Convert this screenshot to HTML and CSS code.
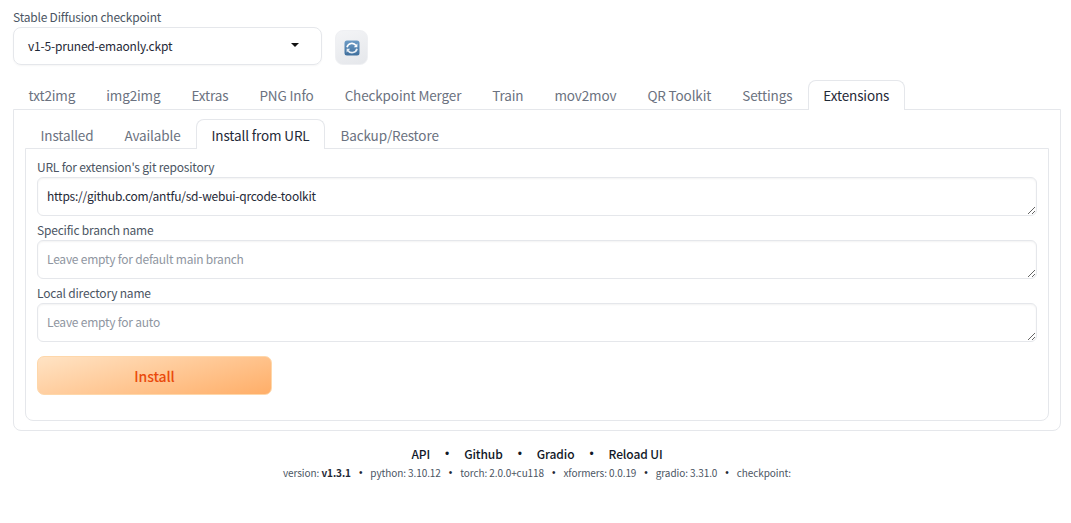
FILE: index.html
```html
<!DOCTYPE html>
<html lang="en">
<head>
<meta charset="utf-8">
<title>Extensions</title>
<link rel="stylesheet" href="styles.css">
</head>
<body>
<div class="app">
  <div class="top">
    <div class="ckpt">
      <div class="label ckpt-label">Stable Diffusion checkpoint</div>
      <div class="select"><span>v1-5-pruned-emaonly.ckpt</span><i class="caret"></i></div>
    </div>
    <button class="refresh" aria-label="Refresh">
      <svg width="16" height="16" viewBox="0 0 16 16">
        <defs><linearGradient id="ic" x1="0" y1="0" x2="0" y2="1"><stop offset="0" stop-color="#6d9cc6"/><stop offset="1" stop-color="#3f6f9d"/></linearGradient></defs>
        <rect x="0.5" y="0.5" width="15" height="15" rx="2.5" fill="url(#ic)"/>
        <path d="M3 7.2A5 5 0 0 1 12 5.6" fill="none" stroke="#fff" stroke-width="1.7"/>
        <path d="M13.4 3.6v3.6H9.8z" fill="#fff"/>
        <path d="M13 8.8A5 5 0 0 1 4 10.4" fill="none" stroke="#e8eef4" stroke-width="1.7"/>
        <path d="M2.6 12.4V8.8h3.6z" fill="#e8eef4"/>
      </svg>
    </button>
  </div>
  <nav class="tabs main-tabs">
    <a class="tab">txt2img</a><a class="tab">img2img</a><a class="tab">Extras</a><a class="tab">PNG Info</a><a class="tab">Checkpoint Merger</a><a class="tab">Train</a><a class="tab">mov2mov</a><a class="tab">QR Toolkit</a><a class="tab">Settings</a><a class="tab active">Extensions</a>
  </nav>
  <section class="panel outer">
    <nav class="tabs sub-tabs">
      <a class="tab">Installed</a><a class="tab">Available</a><a class="tab active">Install from URL</a><a class="tab">Backup/Restore</a>
    </nav>
    <div class="panel inner">
      <label class="field">
        <span class="label">URL for extension's git repository</span>
        <textarea class="input" rows="1">https://github.com/antfu/sd-webui-qrcode-toolkit</textarea>
      </label>
      <label class="field">
        <span class="label">Specific branch name</span>
        <textarea class="input" rows="1" placeholder="Leave empty for default main branch"></textarea>
      </label>
      <label class="field">
        <span class="label">Local directory name</span>
        <textarea class="input" rows="1" placeholder="Leave empty for auto"></textarea>
      </label>
      <button class="install">Install</button>
    </div>
  </section>
  <footer class="footer">
    <div class="links"><a>API</a><b>•</b><a>Github</a><b>•</b><a>Gradio</a><b>•</b><a>Reload UI</a></div>
    <div class="versions">
      <span>version: <strong>v1.3.1</strong></span><b>•</b><span>python: 3.10.12</span><b>•</b><span>torch: 2.0.0+cu118</span><b>•</b><span>xformers: 0.0.19</span><b>•</b><span>gradio: 3.31.0</span><b>•</b><span>checkpoint:</span>
    </div>
  </footer>
</div>
</body>
</html>
```
FILE: styles.css
```css
* { box-sizing: border-box; }
html, body { margin: 0; background: #fff; }
body {
  font-family: "Noto Sans CJK SC", "Noto Sans CJK JP", "Noto Sans", sans-serif;
  color: #374151;
  font-size: 12px;
}
.app { padding: 7px 10px 0 13px; }
.top { display: flex; align-items: flex-end; gap: 13px; }
.ckpt { width: 309px; }
.label { display: block; font-size: 12px; letter-spacing: -0.2px; line-height: 17px; color: #4b5563; }
.ckpt-label { line-height: 19px; margin-bottom: 1px; }
.select {
  height: 38px;
  display: flex; align-items: center; justify-content: space-between;
  padding: 0 22px 2px 14px;
  border: 1px solid #e5e7eb; border-radius: 8px;
  box-shadow: 0 1px 2px rgba(0,0,0,.04);
  font-size: 12px; letter-spacing: -0.19px; color: #1f2937;
}
.caret { width: 0; height: 0; border: 4px solid transparent; border-top: 4px solid #111; border-bottom: 0; }
.refresh {
  width: 33px; height: 35px; padding: 0;
  display: flex; align-items: center; justify-content: center;
  background: linear-gradient(160deg, #f3f4f6, #e5e7eb);
  border: 1px solid #eff0f3; border-radius: 8px;
}
.tabs { display: flex; align-items: flex-end; }
.tab {
  display: block; height: 30px; padding: 0 14.5px;
  font-size: 13.5px; letter-spacing: -0.13px; line-height: 28px; color: #6b7280; white-space: nowrap;
  border: 1px solid transparent; border-bottom: 0;
  margin-bottom: -1px;
}
.sub-tabs .tab { line-height: 30px; }
.tab.active {
  color: #1f2937; background: #fff; position: relative; z-index: 1;
  border-color: #e5e7eb; border-radius: 8px 8px 0 0;
}
.main-tabs { margin-top: 15px; }
.panel { border: 1px solid #e5e7eb; }
.outer { height: 322px; padding: 9px 11px 0; border-radius: 0 0 8px 8px; }
.inner { height: 273px; padding: 9px 11px 0; border-radius: 0 0 8px 8px; }
.field { display: block; margin-bottom: 5px; }
.field .label { margin-bottom: 2px; }
.input {
  display: block; width: 100%; height: 39px; padding: 8px 9px;
  font: inherit; font-size: 12px; letter-spacing: -0.23px; line-height: 19px; color: #1f2937;
  border: 1px solid #e5e7eb; border-radius: 6px;
  box-shadow: inset 0 1px 2px rgba(0,0,0,.05); outline: none; background: #fff;
}
.input::placeholder { color: #8f96a1; opacity: 1; }
.install {
  display: block; width: 235px; height: 39px; margin-top: 14px; padding: 1px 0 0;
  font: inherit; font-size: 14px; letter-spacing: -0.1px; font-weight: 500; color: #ea4a0c;
  background: linear-gradient(165deg, #ffe3c4, #ffae68);
  border: 1px solid #fed7aa; border-radius: 7px;
}
.footer { text-align: center; margin-top: 14px; }
.links, .versions { display: flex; justify-content: center; align-items: center; }
.links { font-size: 12px; letter-spacing: -0.1px; line-height: 18px; font-weight: 500; color: #111827; gap: 15px; }
.links b { font-family: "Liberation Sans", sans-serif; font-weight: 400; font-size: 12px; }
.versions { font-size: 10px; letter-spacing: -0.08px; line-height: 16px; color: #4b5563; gap: 8px; margin-top: 2px; }
.versions b { font-family: "Liberation Sans", sans-serif; font-weight: 400; font-size: 10px; color: #1f2937; }
.versions strong { font-weight: 600; color: #1f2937; }
```
